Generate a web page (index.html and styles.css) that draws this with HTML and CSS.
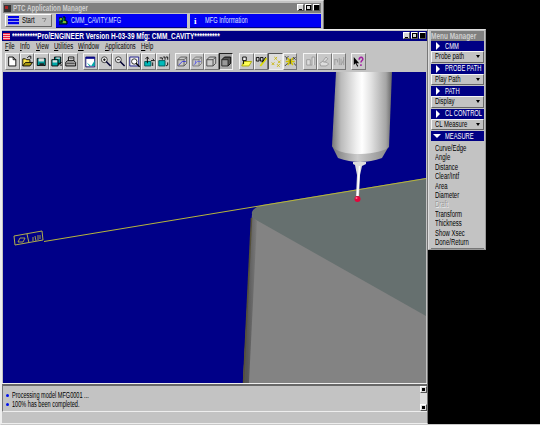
FILE: index.html
```html
<!DOCTYPE html>
<html lang="en"><head><meta charset="utf-8"><title>PTC Application Manager</title>
<link rel="stylesheet" href="styles.css"></head>
<body>
<svg class="defs" width="0" height="0"><defs>
<g id="cube"><path d="M2 6h7v7H2zM5 3h7v7M2 6l3-3M9 6l3-3M9 13l3-3"/></g>
</defs></svg>
<div class="desktop">
<section class="manager">
 <header class="title gray"><svg class="logo" viewBox="0 0 7 7"><path d="M0 0h7v7H0z" fill="#333"/><path d="M1 1h3v3H1z" fill="#a22"/></svg><span class="t bold wide">PTC Application Manager</span>
 <div class="controls"><i class="min"></i><i class="max"></i><i class="close"></i></div></header>
 <div class="tasks">
  <button class="start"><i class="stripes"></i><span class="t">Start</span><svg width="6" height="6"><path d="M0 .5h4L2 4" fill="none" stroke="#888"/></svg></button>
  <div class="task"><svg width="10" height="10"><path d="M1 2h3v4H1M5 1h2v4h2v3H1" fill="#075" stroke="#000"/><path d="M2 3h2M5 6h3" stroke="#ff0"/></svg><span class="t">CMM_CAVITY.MFG</span></div>
  <div class="task info"><b>i</b><span class="t">MFG Information</span></div>
 </div>
</section>
<div class="workspace">
<main class="window">
 <header class="title blue"><i class="redlogo"></i><span class="t bold maintitle">**********Pro/ENGINEER Version H-03-39 Mfg: CMM_CAVITY**********</span>
 <div class="controls"><i class="min"></i><i class="max"></i><i class="close"></i></div></header>
 <nav class="menus"><span class="m1"><u>F</u>ile</span><span class="m2"><u>I</u>nfo</span><span class="m3"><u>V</u>iew</span><span class="m4"><u>U</u>tilities</span><span class="m5"><u>W</u>indow</span><span class="m6"><u>A</u>pplications</span><span class="m7"><u>H</u>elp</span></nav>
 <div class="toolbar">
  <div class="group">
   <button><svg viewBox="0 0 14 16"><path d="M3 3h5l3 3v7H3z" fill="#fff" stroke="#000"/><path d="M8 3v3h3" fill="none" stroke="#000"/></svg></button>
   <button><svg viewBox="0 0 14 16"><path d="M2 13V5h3l1 1h4v3" fill="#ffe94a" stroke="#000"/><path d="M2 13l3-4h8l-3 4z" fill="#aa9a10" stroke="#000"/><path d="M7 4l2-2h2v3" fill="none" stroke="#000"/></svg></button>
   <button><svg viewBox="0 0 14 16"><path d="M2.5 4.500h9v8h-9z" fill="#099" stroke="#000"/><path d="M4 4.500h6v3.500H4z" fill="#ddd"/><path d="M5 10h5v3H5z" fill="#222"/></svg></button>
   <button><svg viewBox="0 0 14 16"><path d="M5 3h7v7H5z" fill="#099" stroke="#000"/><path d="M2 6h7v7H2z" fill="#0aa" stroke="#000"/><path d="M3 6.500h5v2.500H3zM7 3.500h4V5H7z" fill="#ddd"/><path d="M9 12l4-3M11 12h3" stroke="#000"/></svg></button>
   <button><svg viewBox="0 0 14 16"><path d="M5 8V3h6v6" fill="#fff" stroke="#000"/><path d="M2 9l2-2h7l2 2v4H2z" fill="#aaa" stroke="#000"/><path d="M3 10h9M6 5h4M6 7h3" stroke="#333"/></svg></button>
  </div>
  <div class="group g2">
   <button><svg viewBox="0 0 14 16"><path d="M2 3h10v11H2z" fill="#fff" stroke="#006"/><path d="M2 3h10v2H2z" fill="#008"/><path d="M3 9l5 4 4-6v6H6z" fill="#0aa"/></svg></button>
   <button><svg viewBox="0 0 14 16"><circle cx="6" cy="6" r="3.300" fill="#eee" stroke="#333"/><path d="M4.500 6h3M6 4.500v3" stroke="#000"/><path d="M8 8l5 5" stroke="#003" stroke-width="1.700"/></svg></button>
   <button><svg viewBox="0 0 14 16"><circle cx="6" cy="6" r="3.300" fill="#eee" stroke="#333"/><path d="M4.500 6h3" stroke="#000"/><path d="M8 8l5 5" stroke="#003" stroke-width="1.700"/></svg></button>
   <button><svg viewBox="0 0 14 16"><path d="M2 3h10v10H2z" fill="#eee" stroke="#118"/><circle cx="7" cy="8" r="3" fill="#fff" stroke="#222"/><path d="M9 10l4 4" stroke="#000" stroke-width="1.500"/></svg></button>
   <button><svg viewBox="0 0 14 16"><path d="M3 8h7v5H3z" fill="#0bb" stroke="#055"/><path d="M6 10V3M4 5l2-2 2 2M10 7h4l-2-2M12 9v4" fill="none" stroke="#000"/></svg></button>
   <button><svg viewBox="0 0 14 16"><path d="M2 7h7v6H2z" fill="#0bb" stroke="#055"/><path d="M3 4h3v2M7 3h2v3M10 3h2v3M10 13l2-1v-3" fill="none" stroke="#000"/></svg></button>
  </div>
  <div class="group g3">
   <button><svg viewBox="0 0 14 16"><use href="#cube" fill="none" stroke="#555"/><path d="M3 12l4-4h4" fill="none" stroke="#33d"/></svg></button>
   <button><svg viewBox="0 0 14 16"><use href="#cube" fill="none" stroke="#777"/><path d="M3 12l4-4h4M5 7v4" fill="none" stroke="#66d"/></svg></button>
   <button><svg viewBox="0 0 14 16"><use href="#cube" fill="#ccc" stroke="#444"/></svg></button>
   <button class="pressed"><svg viewBox="0 0 14 16"><path d="M2 6l3-3h7v7l-3 3" fill="#555" stroke="#000"/><path d="M2 6h7v7H2z" fill="#999" stroke="#222"/></svg></button>
  </div>
  <div class="group g4">
   <button><svg viewBox="0 0 14 16"><path d="M4 8h9l-3 5H2z" fill="#ff5" stroke="#aa0"/><path d="M3 3h4v4H3zM4 7v4" fill="#eee" stroke="#000"/></svg></button>
   <button><svg viewBox="0 0 14 16"><path d="M6 13l7-9" stroke="#dd0" stroke-width="2"/><path d="M1.500 3.500h3v4h-3zM6 3.500h3v4H6zM12 3l-4 6" fill="none" stroke="#000"/></svg></button>
   <button class="pressed light"><svg viewBox="0 0 14 16"><path d="M6 3l3 3M9 3L6 6M10 7l3 3M13 7l-3 3M3 9l3 3M6 9l-3 3M9 11l3 3M12 11l-3 3" stroke="#c8b400"/></svg></button>
   <button><svg viewBox="0 0 14 16"><path d="M2 8h10M4 4l6 8M10 4l-6 8" stroke="#d2c400" stroke-width="1.700"/><path d="M1 2l2 2 2-2M3 4v2M10 3l3 3M13 3l-3 3M11 10l3 3M4 10l-3 3M7 5v6" stroke="#333" fill="none"/></svg></button>
  </div>
  <div class="group g5">
   <button><svg viewBox="0 0 14 16"><path d="M3 6h4v6H3zM7 12h2V3h3v9" fill="#ddd" stroke="#999"/></svg></button>
   <button><svg viewBox="0 0 14 16"><path d="M2 10l3-2 5 1 2 2-3 2H3zM5 8l4-5 2 2-4 4" fill="#ddd" stroke="#999"/></svg></button>
   <button><svg viewBox="0 0 14 16"><path d="M2 5v7M2 6h3v3M7 12V4M9 5v7l3-6M12 3v9" fill="none" stroke="#999"/></svg></button>
  </div>
  <div class="group g6"><button><svg viewBox="0 0 14 16"><path d="M2 3v9l2-2 2 4 1-1-2-3h3z"/><path d="M8 6c0-4 5-3 4 0-1 1-2 2-2 3M10 11v2" stroke="#a020a0" stroke-width="1.700" fill="none"/></svg></button></div>
 </div>
 <svg class="model" viewBox="0 0 423 311">
  <defs>
   <linearGradient id="metal"><stop offset="0" stop-color="#777"/><stop offset=".15" stop-color="#bbb"/><stop offset=".4" stop-color="#eee"/><stop offset=".5" stop-color="#fff"/><stop offset=".65" stop-color="#e2e2e2"/><stop offset=".9" stop-color="#a5a5a5"/><stop offset="1" stop-color="#666"/></linearGradient>
   <linearGradient id="cone"><stop offset="0" stop-color="#777"/><stop offset=".45" stop-color="#ccc"/><stop offset="1" stop-color="#888"/></linearGradient>
   <linearGradient id="edge" gradientUnits="userSpaceOnUse" x1="244" y1="0" x2="256" y2="0"><stop offset="0" stop-color="#555"/><stop offset="1" stop-color="#838383"/></linearGradient>
  </defs>
  <path d="M0 0h423v311H0z" fill="#000088"/>
  <path d="M249 142l-9 169h183V160z" fill="#838383"/>
  <path d="M249 144l-9 167h6l8-162z" fill="url(#edge)"/>
  <path d="M248.500 146l-8 165" stroke="#555038" stroke-width="1.500"/>
  <path d="M423 106L259 133q-8 2-10 7-1 6 6 9l168 95z" fill="#66706f"/>
  <path d="M41 169.500L423 106.500" fill="none" stroke="#b7b53c"/>
  <path d="M11 164l28-5 1 9-28 5zM24 162l2 9" fill="none" stroke="#b0ad4c"/>
  <path d="M15 170l2-4h5l-2 4zM30 165v4M32 164l1 5M35 163v5M37 163v4" fill="none" stroke="#b0ad4c" stroke-width=".9"/>
  <path d="M329 74l6 12q22 8 44 0l7-12z" fill="url(#cone)"/>
  <path d="M333 0h56l-3 75q-7 6-29 7-22 0-28-8z" fill="url(#metal)"/>
  <path d="M350 90h13v2l-4 2-2 9-1 21h-3l1-21-2-10-2-1z" fill="#ddd"/>
  <path d="M356.500 94l-2 30" stroke="#fff" stroke-width="1.500"/>
  <circle cx="354.500" cy="127" r="3" fill="#e2063c"/><circle cx="353.500" cy="126" r="1" fill="#ff6688"/>
 </svg>
 <div class="console"><ul><li><span class="t">Processing model MFG0001 ...</span></li><li><span class="t">100% has been completed.</span></li></ul><div class="scroll"><i></i><i></i></div></div>
</main>
<aside class="menu">
 <header class="title gray"><span class="t bold wide">Menu Manager</span></header>
 <div class="head"><i></i><span>CMM</span></div><div class="pick"><span class="t">Probe path</span><i></i></div>
 <div class="head"><i></i><span>PROBE PATH</span></div><div class="pick"><span class="t">Play Path</span><i></i></div>
 <div class="head"><i></i><span>PATH</span></div><div class="pick"><span class="t">Display</span><i></i></div>
 <div class="head"><i></i><span>CL CONTROL</span></div><div class="pick"><span class="t">CL Measure</span><i></i></div>
 <div class="head open"><i></i><span>MEASURE</span></div>
 <ul class="list"><li>Curve/Edge</li><li>Angle</li><li>Distance</li><li>Clear/Intf</li><li>Area</li><li>Diameter</li><li class="off">Draft</li><li>Transform</li><li>Thickness</li><li>Show Xsec</li><li>Done/Return</li></ul>
</aside>
</div></div>
</body></html>
```
FILE: styles.css
```css
*{box-sizing:border-box}
body{margin:0;width:540px;height:425px;background:#000;overflow:hidden;font:8.5px/9px "Liberation Sans",sans-serif;color:#000}
.defs{display:none}
.desktop{height:425px;border-left:1px solid #eee;border-bottom:1px solid #c8c8c8}
button{font:inherit;color:inherit;padding:0;margin:0;border-radius:0}
svg{display:block;flex:none}
.t,.menus span,.list li,.head span{white-space:nowrap;transform-origin:left;transform:scaleX(.7)}
.t,.head span{flex:none}
.bold{font-weight:bold}
.manager{width:323px;height:29px;background:#c3c3c3;padding:2px 2px 0;border-top:1px solid #ddd;border-right:1px solid #777}
.title{height:10px;display:flex;align-items:center;overflow:hidden;position:relative}
.gray{background:#808080;color:#d0d0d0}
.blue{background:#000084;color:#fff}
.logo{width:7px;height:7px;margin:0 2px 0 1px}
.wide{transform:scaleX(.76)}
.manager .wide{transform:scaleX(.73)}
.controls{position:absolute;right:1px;top:1px;display:flex;gap:1px}
.controls i{width:7px;height:7px;background:#d6d6d6;border:1px solid;border-color:#fff #555 #555 #fff;display:grid;place-items:center}
.controls i::before{content:"";display:block;width:3px;height:3px;border:1px solid #000}
.controls .min::before{border-width:0 0 1px}
.controls .close::before{background:#000}
.tasks{display:flex;height:15px;padding:1px 0 0 2px}
.start{width:47px;height:13px;display:flex;align-items:center;border:1px solid #fff;border-color:#fff #666 #666 #fff;background:#c3c3c3;padding-left:2px}
.start .t{margin:0 auto 0 3px}.start svg{margin-right:3px}
.stripes{width:11px;height:9px;background:repeating-linear-gradient(#0000e8 0 2px,#9999e8 2px 3px)}
.task{width:131px;height:14px;display:flex;align-items:center;background:#0000f4;color:#dfe4ff;margin-left:4px;padding-left:2px;border-bottom:1px solid #008}
.task .t{margin-left:3px;transform:scaleX(.665)}
.info{margin-left:3px;padding-left:4px}.info b{font:bold 9px "Liberation Serif",serif;color:#fff}.info .t{margin-left:8px;transform:scaleX(.67)}
.workspace{display:flex;height:395px}
.window{width:427px;height:395px;background:#c3c3c3;border:1px solid #eee;border-right-color:#777;padding-top:1px}
.redlogo{width:7px;height:7px;margin:0 2px 0 1px;background:repeating-linear-gradient(#f02040 0 1px,#fbb 1px 2px)}
.maintitle{transform:scaleX(.765)}
.menus{display:flex;height:11px;padding:1px 0 0 3px}
.menus span{flex:none}
.m1{width:15px}.m2{width:15.5px}.m3{width:18.5px}.m4{width:24px}.m5{width:26.5px}.m6{width:36.5px}
.menus .m6{transform:scaleX(.67)}
.toolbar{height:20px;display:flex;padding:1px 0 0 3px}
.group{display:flex}
.g2{margin-left:5.5px}.g3{margin-left:5px}.g4{margin-left:6px}.g5{margin-left:5.5px}.g6{margin-left:5px}
.group button{width:14.5px;height:17px;background:#c8c8c8;border:1px solid;border-color:#f5f5f5 #777 #777 #f5f5f5}
.group button svg{width:12.5px;height:15px}
.group .pressed{background:#aaa;border-color:#222 #eee #eee #222}
.group .light{background:#ddd;border-color:#555 #eee #eee #555}
.model{width:423px;height:311px;margin-left:1px}
.console{height:28px;margin:1px 0 0;border-top:2px solid #686868;border-left:1px solid #777;border-bottom:1px solid #eee;display:flex;justify-content:space-between;box-shadow:0 -1px #eee}
ul{list-style:none;margin:0;padding:0}
.console ul{padding:5px 0 0 3px}.console li{display:flex;align-items:center;height:9px}
.console li::before{content:"";width:3px;height:3px;border-radius:50%;background:#0010ee;margin-right:3px}
.console .t{transform:scaleX(.655)}
.scroll{width:7px;background:#ddd;display:flex;flex-direction:column;justify-content:space-between}
.scroll i{height:7px;background:#ddd;border:1px solid;border-color:#fff #555 #555 #fff;display:grid;place-items:center}
.scroll i::before{content:"";width:3px;height:3px;background:#000}
.menu{width:58px;height:221px;background:#c3c3c3;border:1px solid #ddd;border-color:#ddd #999 #999 #ddd;padding:1px 1px 0 2px}
.head{height:10px;background:#000084;color:#fff;display:flex;align-items:center;margin-top:1px;overflow:hidden}
.title + .head{margin-top:0}
.head i{flex:none;width:0;height:0;border:solid transparent;border-width:4px 0 4px 4px;border-left-color:#fff;margin:0 5px 0 5px}
.open i{border-width:4px 4px 0;border-color:#fff transparent transparent;margin:0 4px 0 2px}
.head span{transform:scaleX(.68)}
.pick{height:11.5px;border:1px solid;border-color:#f5f5f5 #666 #666 #f5f5f5;display:flex;align-items:center;padding:0 2px 0 3px;position:relative}
.pick i{position:absolute;right:3px;border:2px solid transparent;border-bottom:0;border-top:3px solid #000}
.list{padding:3px 0 0 4px;height:108px;border-bottom:1px solid #777}.list li{height:9.4px}
.off{color:#999;text-shadow:1px 1px #eee}
```
